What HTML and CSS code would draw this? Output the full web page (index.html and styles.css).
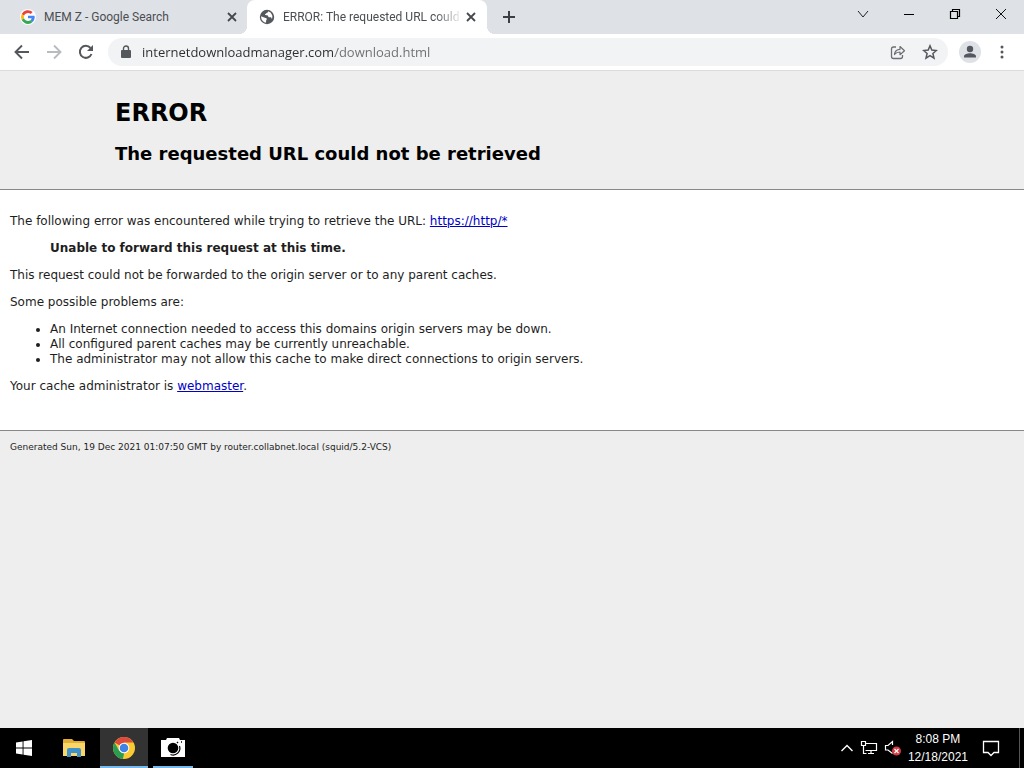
FILE: index.html
```html
<!DOCTYPE html>
<html lang="en">
<head>
<meta charset="utf-8">
<title>ERROR: The requested URL could not be retrieved</title>
<link rel="stylesheet" href="styles.css">
</head>
<body>
<header class="browser">
  <div class="tab-strip">
    <div class="tab">
      <svg class="favicon" width="16" height="16" viewBox="0 0 48 48" aria-hidden="true">
        <circle cx="24" cy="24" r="24" fill="#fff"/>
        <path fill="#ea4335" d="M24 12c3 0 6 1 8 3l6-6A21 21 0 0 0 5 15l7 5c2-5 7-8 12-8z"/>
        <path fill="#4285f4" d="M44 24c0-1 0-3-.4-4H24v8h11c-.5 3-2 5-4 6l7 5c4-4 6-9 6-15z"/>
        <path fill="#fbbc05" d="M12 28a13 13 0 0 1 0-8l-7-5a21 21 0 0 0 0 18z"/>
        <path fill="#34a853" d="M24 45c6 0 10-2 14-6l-7-5c-6 4-16 2-19-6l-7 5c4 7 11 12 19 12z"/>
      </svg>
      <span class="tab-title">MEM Z - Google Search</span>
      <button class="tab-close" aria-label="Close MEM Z tab"><svg width="10" height="10" viewBox="0 0 10 10"><path d="M1 1l8 8M9 1L1 9" stroke="#45494d" stroke-width="1.8"/></svg></button>
    </div>
    <div class="tab active">
      <svg class="favicon" width="16" height="16" viewBox="0 0 16 16" aria-hidden="true">
        <circle cx="8" cy="8" r="7.2" fill="#54575b"/>
        <path fill="#fff" d="M2.200 7.200l2.900 1.200c1 .5 2.400.2 2.700 1.300.2.900-.7 1.100-.7 2v1.900C4 13.300 1.800 10.500 2.200 7.200z"/>
        <path fill="#fff" d="M9.300 2.300c-.4 1-.2 1.300-1.200 1.500-1 .2-.9 1.100-1.700 1.200-.6.1-.5.900 0 1.100.9.300 1.600-.2 2.300.3.700.6.400 1.500 1.300 1.800.8.300 1.800-.2 2.400.6.400.5.300 1.200.2 1.800A5.700 5.700 0 0 0 9.300 2.300z"/>
      </svg>
      <span class="tab-title faded">ERROR: The requested URL could</span>
      <button class="tab-close" aria-label="Close ERROR tab"><svg width="10" height="10" viewBox="0 0 10 10"><path d="M1 1l8 8M9 1L1 9" stroke="#45494d" stroke-width="1.8"/></svg></button>
    </div>
    <button class="new-tab" aria-label="New tab"><svg width="14" height="14" viewBox="0 0 14 14"><path d="M7 1v12M1 7h12" stroke="#3c4043" stroke-width="2"/></svg></button>
    <div class="window-controls">
      <button aria-label="Search tabs"><svg width="12" height="12" viewBox="0 0 12 12"><path d="M1 3l5 6 5-6" fill="none" stroke="#222"/></svg></button>
      <button aria-label="Minimize"><svg width="12" height="12" viewBox="0 0 12 12"><path d="M1 6.500h10" stroke="#000"/></svg></button>
      <button aria-label="Restore"><svg width="12" height="12" viewBox="0 0 12 12"><path d="M1.500 3.500h7v7h-7zM3.500 3.500v-2h7v7h-2" fill="none" stroke="#000" stroke-width="1.200"/></svg></button>
      <button aria-label="Close"><svg width="12" height="12" viewBox="0 0 12 12"><path d="M1 1l10 10M11 1L1 11" stroke="#111"/></svg></button>
    </div>
  </div>
  <div class="toolbar">
    <button class="tool" aria-label="Back"><svg width="16" height="16" viewBox="0 0 16 16"><path d="M15 8H2M8 1.500L1.500 8 8 14.500" fill="none" stroke="#54575b" stroke-width="1.900"/></svg></button>
    <button class="tool" aria-label="Forward"><svg width="16" height="16" viewBox="0 0 16 16"><path d="M1 8h13M8 1.500L14.500 8 8 14.500" fill="none" stroke="#b9bbbe" stroke-width="1.900"/></svg></button>
    <button class="tool" aria-label="Reload"><svg width="16" height="16" viewBox="0 0 16 16"><path d="M13.500 10A6 6 0 1 1 12.500 4" fill="none" stroke="#54575b" stroke-width="2"/><path d="M15 1v6H9z" fill="#54575b"/></svg></button>
    <div class="address">
      <svg width="12" height="14" viewBox="0 0 12 14" aria-hidden="true"><rect x="1" y="5" width="10" height="8" rx="1" fill="#54575b"/><path d="M3.500 6V3.500a2.500 2.500 0 0 1 5 0V6" fill="none" stroke="#54575b" stroke-width="1.400"/></svg>
      <input class="url" type="text" aria-label="Address" value="internetdownloadmanager.com/download.html">
      <button class="tool" aria-label="Share"><svg width="16" height="16" viewBox="0 0 16 16"><path d="M6 3H3.500Q1.500 3 1.500 5v7.500q0 2 2 2h7q2 0 2-2V11" fill="none" stroke="#6b6e72" stroke-width="1.300"/><path d="M4.500 10.500q.5-5 5.500-5.200V2.500l4.500 4.200-4.500 4V8Q6.500 8 4.500 10.500z" fill="none" stroke="#6b6e72" stroke-width="1.200" stroke-linejoin="round"/></svg></button>
      <button class="tool" aria-label="Bookmark"><svg width="16" height="16" viewBox="0 0 16 16"><path d="M8 1.800l1.800 4.300 4.600.4-3.500 3 1.100 4.600L8 11.700l-4 2.400 1.100-4.600-3.500-3 4.600-.4z" fill="none" stroke="#54575b" stroke-width="1.500"/></svg></button>
    </div>
    <button class="tool profile" aria-label="Profile"><svg width="22" height="22" viewBox="0 0 22 22"><circle cx="11" cy="11" r="11" fill="#dee1e6"/><circle cx="11" cy="8" r="3.200" fill="#54575f"/><path d="M5 16.500v-1.300c0-2 3.500-3 6-3s6 1 6 3v1.300z" fill="#54575f"/></svg></button>
    <button class="tool" aria-label="Menu"><svg width="16" height="16" viewBox="0 0 16 16" fill="#54575b"><circle cx="8" cy="3" r="1.500"/><circle cx="8" cy="8" r="1.500"/><circle cx="8" cy="13" r="1.500"/></svg></button>
  </div>
</header>
<main class="page">
  <div class="titles">
    <h1>ERROR</h1>
    <h2>The requested URL could not be retrieved</h2>
  </div>
  <div class="content">
    <p>The following error was encountered while trying to retrieve the URL: <a href="#">https://http/*</a></p>
    <blockquote>Unable to forward this request at this time.</blockquote>
    <p>This request could not be forwarded to the origin server or to any parent caches.</p>
    <p>Some possible problems are:</p>
    <ul>
      <li>An Internet connection needed to access this domains origin servers may be down.</li>
      <li>All configured parent caches may be currently unreachable.</li>
      <li>The administrator may not allow this cache to make direct connections to origin servers.</li>
    </ul>
    <p>Your cache administrator is <a href="#">webmaster</a>.</p>
  </div>
  <p class="generated">Generated Sun, 19 Dec 2021 01:07:50 GMT by router.collabnet.local (squid/5.2-VCS)</p>
</main>
<footer class="taskbar">
  <button class="task" aria-label="Start"><svg width="18" height="18" viewBox="0 0 18 18" fill="#fff"><path d="M1 3.400l6.600-.9v6H1zM8.500 2.300L17 1v7.500H8.500zM1 9.400h6.600v6L1 14.500zM8.500 9.400H17V17l-8.500-1.300z"/></svg></button>
  <button class="task" aria-label="File Explorer"><svg width="22" height="20" viewBox="0 0 22 20"><path d="M0 2q0-1 1-1h8l2 2h10q1 0 1 1v14H0z" fill="#e3ae35"/><path d="M0 5h22v13H0z" fill="#fad568"/><path d="M4 19v-7q0-2 2-2h10q2 0 2 2v7h-4v-4H8v4z" fill="#3f91cc"/></svg></button>
  <button class="task current" aria-label="Google Chrome"><svg width="24" height="24" viewBox="0 0 24 24"><circle cx="12" cy="12" r="11" fill="#fbc934"/><path d="M12 12L2.500 6.500A11 11 0 0 1 21.500 6.500H12z" fill="#dc4b3e"/><path d="M2.500 6.500L7.200 14.700 12 17.500 11 23A11 11 0 0 1 2.500 6.500z" fill="#2b9d50"/><path d="M16.800 14.700L12 23h-1l3-6z" fill="#fbc934"/><circle cx="12" cy="12" r="5.300" fill="#fff"/><circle cx="12" cy="12" r="4.300" fill="#3f83e8"/></svg></button>
  <button class="task running" aria-label="Camera"><svg width="26" height="20" viewBox="0 0 26 20"><path d="M1 2h5l1-2h12l1 2h5v17H1z" fill="#fff"/><circle cx="13" cy="10" r="5.300" fill="#000"/><path d="M19.500 8a6.800 6.800 0 0 1-9 8.500" fill="none" stroke="#000" stroke-width="1.200"/><path d="M17 4l1 1M21 4h1" stroke="#000" stroke-width="1.400"/></svg></button>
  <div class="tray">
    <button aria-label="Show hidden icons"><svg width="14" height="10" viewBox="0 0 14 10"><path d="M1.500 8L7 2.500 12.500 8" fill="none" stroke="#fff" stroke-width="1.400"/></svg></button>
    <button aria-label="Network"><svg width="18" height="16" viewBox="0 0 18 16" fill="none" stroke="#fff" stroke-width="1.200"><path d="M6 3.500h10.500v7H5.500M8 13.500h6M11 10.500v3M3.500 6v7.500h3"/><path d="M1.500 1.500h4v4h-4z"/></svg></button>
    <button aria-label="Volume muted"><svg width="18" height="16" viewBox="0 0 18 16"><path d="M8.500 5V1.500L4 5.500H1.500V10H4l4.500 3.500" fill="none" stroke="#fff" stroke-width="1.200"/><circle cx="12.500" cy="11" r="4.500" fill="#d43a42"/><path d="M10.500 9l4 4M14.500 9l-4 4" stroke="#fff" stroke-width="1.300"/></svg></button>
    <div class="clock"><time>8:08 PM</time><time>12/18/2021</time></div>
    <button class="notices" aria-label="Notifications"><svg width="18" height="18" viewBox="0 0 18 18"><path d="M1.500 2.500h15v11H12l-3 3-3-3H1.500z" fill="none" stroke="#fff" stroke-width="1.300"/></svg></button>
  </div>
</footer>
</body>
</html>
```
FILE: styles.css
```css
* { box-sizing: border-box; }
body {
  margin: 0;
  min-height: 100vh;
  display: flex;
  flex-direction: column;
  font-family: "DejaVu Sans", sans-serif;
  font-size: 12px;
  line-height: 15px;
  color: #1e1e1e;
  background: #eee;
}
button {
  display: flex;
  align-items: center;
  justify-content: center;
  padding: 0;
  border: 0;
  background: none;
  flex: none;
}
svg { display: block; flex: none; }

.browser { font-family: Roboto, sans-serif; }
.tab-strip {
  display: flex;
  height: 34px;
  padding-left: 8px;
  background: #dee1e6;
}
.tab {
  display: flex;
  align-items: center;
  flex: 0 1 240px;
  min-width: 0;
  padding: 0 8px 0 12px;
  color: #4b4e52;
}
.tab.active {
  position: relative;
  margin-left: -1px;
  background: #fff;
  border-radius: 8px 8px 0 0;
}
.tab.active::before, .tab.active::after {
  content: "";
  position: absolute;
  bottom: 0;
  width: 8px;
  height: 8px;
}
.tab.active::before {
  right: 100%;
  background: radial-gradient(circle at 0 0, transparent 8px, #fff 8px);
}
.tab.active::after {
  left: 100%;
  background: radial-gradient(circle at 100% 0, transparent 8px, #fff 8px);
}
.tab-title {
  flex: 1;
  margin-left: 8px;
  overflow: hidden;
  white-space: nowrap;
}
.faded {
  -webkit-mask-image: linear-gradient(to left, transparent, #000 28px);
  mask-image: linear-gradient(to left, transparent, #000 28px);
}
.tab-close { width: 16px; height: 16px; }
.new-tab { width: 28px; margin-left: 8px; }
.window-controls { display: flex; margin-left: auto; padding-bottom: 6px; }
.window-controls button { width: 46px; }

.toolbar {
  display: flex;
  align-items: center;
  gap: 4px;
  height: 37px;
  padding: 0 8px;
  background: #fff;
  border-bottom: 1px solid #dcdcdc;
}
.tool { width: 28px; height: 28px; }
.address {
  display: flex;
  align-items: center;
  flex: 1;
  min-width: 0;
  gap: 4px;
  height: 28px;
  margin-left: 4px;
  padding: 0 4px 0 12px;
  border-radius: 14px;
  background: #f1f3f4;
}
.profile { margin-left: 4px; }
.url {
  flex: 1;
  min-width: 0;
  height: 24px;
  margin-left: 6px;
  padding: 0;
  border: 0;
  font: 13px/20px "Open Sans", sans-serif;
  color: transparent;
  caret-color: #202124;
  background: linear-gradient(to right, #2b2d30 193px, #6b6e72 193px);
  -webkit-background-clip: text;
  background-clip: text;
}

.page { flex: 1; background: #eee; }
.titles {
  padding: 26px 10px 23px 115px;
  border-bottom: 1px solid #888;
  color: #000;
}
h1, h2 { margin: 0; font-weight: bold; }
h1 { font-size: 24px; line-height: 32px; }
h2 { margin-top: 13px; font-size: 18px; line-height: 24px; }
.content {
  padding: 24px 10px 36px;
  background: #fff;
  border-bottom: 1px solid #888;
}
.content p, .content ul, blockquote { margin: 0 0 12px; }
.content p:last-child { margin-bottom: 0; }
blockquote { padding-left: 40px; font-weight: bold; }
.content ul { padding-left: 40px; }
.content a { color: #0000c8; }
.generated { margin: 0; padding: 9px 10px; font-size: 9px; }

.taskbar {
  display: flex;
  height: 40px;
  background: #000;
  color: #fff;
}
.task { width: 48px; padding-top: 2px; border-bottom: 2px solid transparent; }
.task:nth-child(2) { margin: 0 2px; }
.task.current { background: #333; border-bottom-color: #76b9ed; }
.task.running { width: 40px; margin-left: 5px; border-bottom-color: #76b9ed; }
.tray {
  display: flex;
  align-items: center;
  gap: 6px;
  margin-left: auto;
  padding-right: 4px;
}
.tray::after {
  content: "";
  align-self: stretch;
  margin-left: 13px;
  border-left: 1px solid #555;
}
.clock {
  display: flex;
  flex-direction: column;
  align-items: center;
  font: 12px/18px "Liberation Sans", sans-serif;
}
.notices { margin-left: 8px; }
```
